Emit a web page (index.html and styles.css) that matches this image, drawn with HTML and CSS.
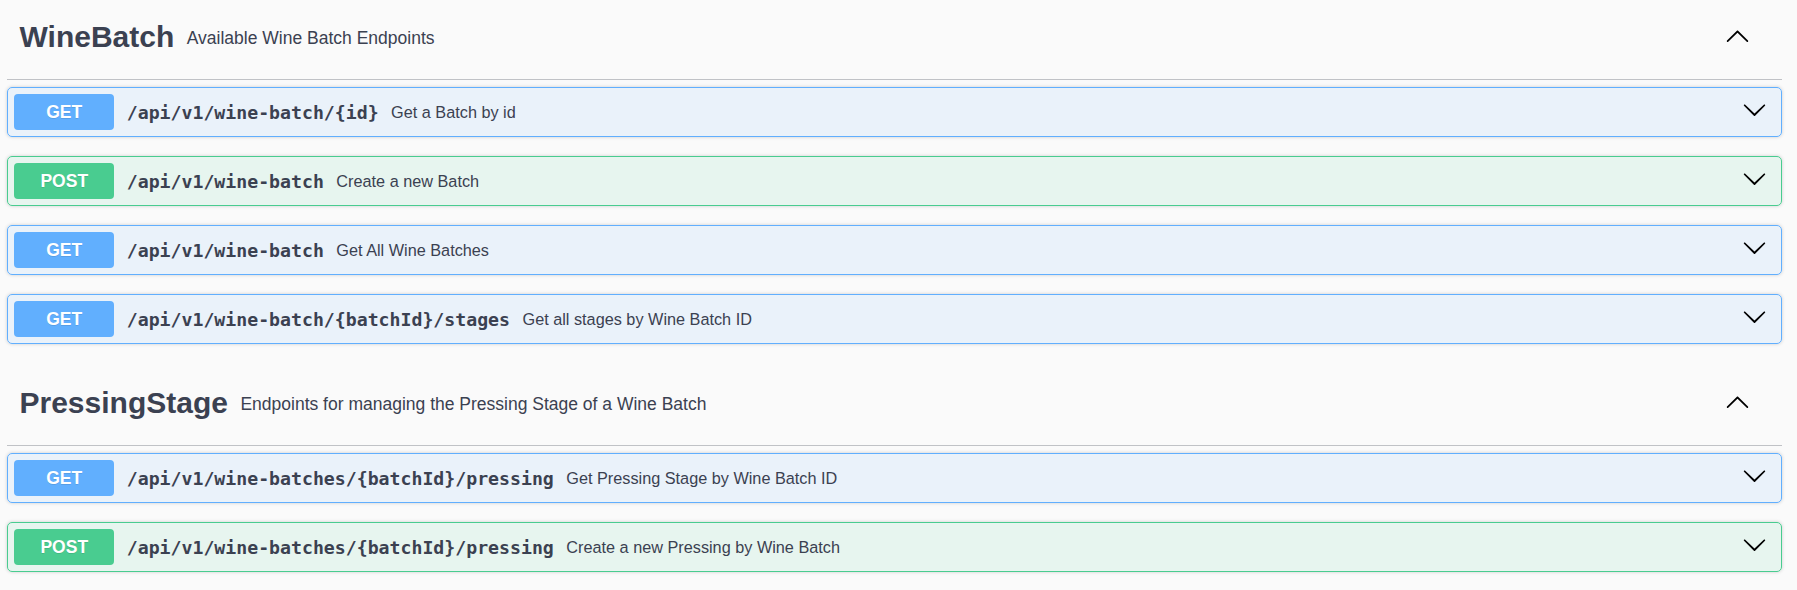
FILE: index.html
```html
<!DOCTYPE html>
<html lang="en">
<head>
<meta charset="utf-8">
<title>Swagger UI</title>
<link rel="stylesheet" href="styles.css">
</head>
<body>
<div class="wrapper">

  <section class="tag-section">
    <h3 class="tag">
      <span class="tag-name">WineBatch</span>
      <small class="tag-desc">Available Wine Batch Endpoints</small>
      <svg class="arrow-up" viewBox="0 0 20 20" width="25" height="25" aria-hidden="true"><path d="M17.418 14.908c.272.268.709.268.979 0s.271-.701 0-.969l-7.908-7.83c-.27-.268-.707-.268-.979 0l-7.908 7.83c-.27.268-.27.701 0 .969.271.268.709.268.979 0L10 7.79l7.418 7.118z"/></svg>
    </h3>
    <div class="ops">
      <div class="op op-get">
        <span class="method">GET</span>
        <span class="path">/api/v1/wine-batch/{id}</span>
        <span class="summary">Get a Batch by id</span>
        <svg class="arrow-down" viewBox="0 0 20 20" width="25" height="25" aria-hidden="true"><path d="M17.418 6.109c.272-.268.709-.268.979 0s.271.701 0 .969l-7.908 7.83c-.27.268-.707.268-.979 0l-7.908-7.830c-.27-.268-.27-.701 0-.969.271-.268.709-.268.979 0L10 13.25l7.418-7.141z"/></svg>
      </div>
      <div class="op op-post">
        <span class="method">POST</span>
        <span class="path">/api/v1/wine-batch</span>
        <span class="summary">Create a new Batch</span>
        <svg class="arrow-down" viewBox="0 0 20 20" width="25" height="25" aria-hidden="true"><path d="M17.418 6.109c.272-.268.709-.268.979 0s.271.701 0 .969l-7.908 7.83c-.27.268-.707.268-.979 0l-7.908-7.83c-.27-.268-.27-.701 0-.969.271-.268.709-.268.979 0L10 13.25l7.418-7.141z"/></svg>
      </div>
      <div class="op op-get">
        <span class="method">GET</span>
        <span class="path">/api/v1/wine-batch</span>
        <span class="summary">Get All Wine Batches</span>
        <svg class="arrow-down" viewBox="0 0 20 20" width="25" height="25" aria-hidden="true"><path d="M17.418 6.109c.272-.268.709-.268.979 0s.271.701 0 .969l-7.908 7.83c-.27.268-.707.268-.979 0l-7.908-7.83c-.27-.268-.27-.701 0-.969.271-.268.709-.268.979 0L10 13.25l7.418-7.141z"/></svg>
      </div>
      <div class="op op-get">
        <span class="method">GET</span>
        <span class="path">/api/v1/wine-batch/{batchId}/stages</span>
        <span class="summary">Get all stages by Wine Batch ID</span>
        <svg class="arrow-down" viewBox="0 0 20 20" width="25" height="25" aria-hidden="true"><path d="M17.418 6.109c.272-.268.709-.268.979 0s.271.701 0 .969l-7.908 7.83c-.27.268-.707.268-.979 0l-7.908-7.83c-.27-.268-.27-.701 0-.969.271-.268.709-.268.979 0L10 13.25l7.418-7.141z"/></svg>
      </div>
    </div>
  </section>

  <section class="tag-section">
    <h3 class="tag">
      <span class="tag-name">PressingStage</span>
      <small class="tag-desc">Endpoints for managing the Pressing Stage of a Wine Batch</small>
      <svg class="arrow-up" viewBox="0 0 20 20" width="25" height="25" aria-hidden="true"><path d="M17.418 14.908c.272.268.709.268.979 0s.271-.701 0-.969l-7.908-7.83c-.27-.268-.707-.268-.979 0l-7.908 7.83c-.27.268-.27.701 0 .969.271.268.709.268.979 0L10 7.79l7.418 7.118z"/></svg>
    </h3>
    <div class="ops">
      <div class="op op-get">
        <span class="method">GET</span>
        <span class="path">/api/v1/wine-batches/{batchId}/pressing</span>
        <span class="summary">Get Pressing Stage by Wine Batch ID</span>
        <svg class="arrow-down" viewBox="0 0 20 20" width="25" height="25" aria-hidden="true"><path d="M17.418 6.109c.272-.268.709-.268.979 0s.271.701 0 .969l-7.908 7.83c-.27.268-.707.268-.979 0l-7.908-7.83c-.27-.268-.27-.701 0-.969.271-.268.709-.268.979 0L10 13.25l7.418-7.141z"/></svg>
      </div>
      <div class="op op-post">
        <span class="method">POST</span>
        <span class="path">/api/v1/wine-batches/{batchId}/pressing</span>
        <span class="summary">Create a new Pressing by Wine Batch</span>
        <svg class="arrow-down" viewBox="0 0 20 20" width="25" height="25" aria-hidden="true"><path d="M17.418 6.109c.272-.268.709-.268.979 0s.271.701 0 .969l-7.908 7.83c-.27.268-.707.268-.979 0l-7.908-7.83c-.27-.268-.27-.701 0-.969.271-.268.709-.268.979 0L10 13.25l7.418-7.141z"/></svg>
      </div>
    </div>
  </section>

</div>
</body>
</html>
```

FILE: styles.css
```css
* {
  box-sizing: border-box;
}

html, body {
  margin: 0;
  padding: 0;
  background: #fafafa;
}

body {
  font-family: "Liberation Sans", Arial, sans-serif;
  color: #3b4151;
}

.wrapper {
  padding: 0 15px 0 7px;
  display: flex;
  flex-direction: column;
  gap: 3px;
}

.tag-section {
  display: flex;
  flex-direction: column;
}

.tag {
  display: flex;
  align-items: center;
  height: 80px;
  margin: 0;
  padding: 0 32px 0 12.5px;
  border-bottom: 1px solid rgba(59, 65, 81, 0.3);
  font-size: 30px;
  font-weight: 700;
  color: #3b4151;
}

.tag-name {
  line-height: 34px;
  margin-bottom: 6px;
}

.tag-desc {
  flex: 1;
  padding: 0 12.5px;
  font-size: 17.5px;
  font-weight: 400;
  color: #3b4151;
  line-height: 20px;
  margin-bottom: 3px;
}

.arrow-up {
  fill: #000;
  flex: none;
  margin-top: -8px;
}

.ops {
  display: flex;
  flex-direction: column;
  gap: 19px;
  padding-top: 7px;
  padding-bottom: 19px;
}

.op {
  display: flex;
  align-items: center;
  height: 50px;
  padding: 0 6.25px;
  border: 1px solid;
  border-radius: 5px;
  box-shadow: 0 0 3.75px rgba(0, 0, 0, 0.19);
}

.op-get {
  background: rgba(97, 175, 254, 0.1);
  border-color: #61affe;
}

.op-post {
  background: rgba(73, 204, 144, 0.1);
  border-color: #49cc90;
}

.method {
  flex: none;
  width: 100px;
  height: 36px;
  line-height: 36px;
  border-radius: 4px;
  text-align: center;
  font-size: 17.5px;
  font-weight: 700;
  color: #fff;
  text-shadow: 0 1px 0 rgba(0, 0, 0, 0.1);
}

.op-get .method {
  background: #61affe;
}

.op-post .method {
  background: #49cc90;
}

.path {
  flex: none;
  padding: 0 12.5px;
  font-family: "DejaVu Sans Mono", "Liberation Mono", monospace;
  font-size: 18.2px;
  font-weight: 700;
  color: #3b4151;
  margin-top: 0;
}

.summary {
  flex: 1;
  font-size: 16.25px;
  color: #3b4151;
  margin-top: 0;
}

.arrow-down {
  flex: none;
  fill: #000;
  margin-right: 7.5px;
  margin-top: -6px;
}
```
